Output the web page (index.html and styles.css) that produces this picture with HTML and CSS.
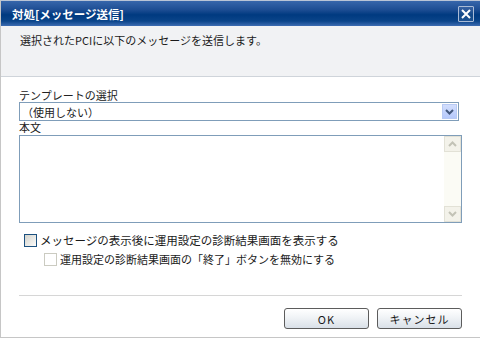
FILE: index.html
```html
<!DOCTYPE html>
<html lang="ja">
<head>
    <meta charset="UTF-8">
    <title>対処[メッセージ送信]</title>
    <link rel="stylesheet" href="styles.css">
</head>
<body>
    <div class="dialog">
        <!-- Barre de titre -->
        <div class="titlebar">
            <span class="title">対処[メッセージ送信]</span>
            <button class="close" aria-label="閉じる">
                <svg width="10" height="10" viewBox="0 0 10 10"><path d="M1 1L9 9M9 1L1 9" stroke="#fff" stroke-width="2"/></svg>
            </button>
        </div>

        <div class="intro">選択されたPCIに以下のメッセージを送信します。</div>

        <div class="form">
            <div class="label">テンプレートの選択</div>
            <div class="select">
                <span class="select-value">（使用しない）</span>
                <span class="select-arrow">
                    <svg width="9" height="6" viewBox="0 0 9 6"><path d="M1 1L4.5 4.5L8 1" fill="none" stroke="#44597e" stroke-width="2"/></svg>
                </span>
            </div>

            <div class="label label-body">本文</div>
            <div class="textarea">
                <div class="text-body"></div>
                <div class="scrollbar">
                    <span class="sb-btn">
                        <svg width="9" height="6" viewBox="0 0 9 6"><path d="M1 5L4.5 1.5L8 5" fill="none" stroke="#c2c2b6" stroke-width="2"/></svg>
                    </span>
                    <span class="sb-track"></span>
                    <span class="sb-btn">
                        <svg width="9" height="6" viewBox="0 0 9 6"><path d="M1 1L4.5 4.5L8 1" fill="none" stroke="#c2c2b6" stroke-width="2"/></svg>
                    </span>
                </div>
            </div>

            <label class="check">
                <span class="box"></span>メッセージの表示後に運用設定の診断結果画面を表示する
            </label>
            <label class="check check-sub">
                <span class="box"></span>運用設定の診断結果画面の「終了」ボタンを無効にする
            </label>

            <div class="rule"></div>

            <div class="actions">
                <button class="btn">OK</button>
                <button class="btn">キャンセル</button>
            </div>
        </div>
    </div>
</body>
</html>
```

FILE: styles.css
```css
/* Reset de base */
* {
    margin: 0;
    padding: 0;
    box-sizing: border-box;
}

body {
    font-family: "Noto Sans CJK JP", "Liberation Sans", sans-serif;
    font-size: 11px;
    line-height: 14px;
    color: #1a1a1a;
    background: #fff;
}

/* Fenêtre */
.dialog {
    width: 480px;
    height: 338px;
    border-left: 1px solid #c6c6c6;
    border-bottom: 1px solid #c6c6c6;
    background: #fff;
    display: flex;
    flex-direction: column;
}

/* Barre de titre */
.titlebar {
    height: 26px;
    border-top: 1px solid #b9c4d6;
    background: linear-gradient(#3766ab 0%, #1d4d93 35%, #003a80 55%, #0a4489 80%, #3d6cb2 100%);
    display: flex;
    align-items: center;
    justify-content: space-between;
    padding: 0 6px 0 11px;
}

.title {
    color: #fff;
    font-weight: 700;
    font-size: 11.5px;
}

.close {
    width: 16px;
    height: 16px;
    border: 1px solid #a9bbd6;
    border-radius: 1px;
    background: rgba(255, 255, 255, 0.08);
    display: flex;
    align-items: center;
    justify-content: center;
    margin-top: 1px;
}

/* Texte d'introduction */
.intro {
    height: 51px;
    background: #f1f2f4;
    border-bottom: 1px solid #cfd4da;
    padding: 7px 19px 0;
}

/* Formulaire */
.form {
    padding: 11px 18px 0 18px;
    display: flex;
    flex-direction: column;
}

.label {
    color: #222;
}

.label-body {
    margin-top: -1px;
    margin-bottom: 1px;
}

.select {
    width: 440px;
    height: 19px;
    border: 1px solid #7f9db9;
    display: flex;
    align-items: center;
    padding-left: 2px;
}

.select-arrow {
    margin-left: auto;
    margin-right: 1px;
    width: 15px;
    height: 15px;
    border: 1px solid #b8caf4;
    background: linear-gradient(#d2defd, #b6c9fb);
    display: flex;
    align-items: center;
    justify-content: center;
}

.textarea {
    width: 443px;
    height: 88px;
    border: 1px solid #7f9db9;
    display: flex;
}

.text-body {
    flex: 1;
}

.scrollbar {
    width: 17px;
    display: flex;
    flex-direction: column;
    background: #fbfbf5;
}

.sb-btn {
    height: 16px;
    border: 1px solid #e2e1d6;
    background: #f3f2ea;
    display: flex;
    align-items: center;
    justify-content: center;
}

.sb-track {
    flex: 1;
}

/* Cases à cocher */
.check {
    display: flex;
    align-items: center;
    height: 18px;
    margin-top: 8px;
    margin-left: 5px;
    font-size: 11.5px;
}

.check .box {
    width: 13px;
    height: 13px;
    border: 1px solid #1c5180;
    background: linear-gradient(135deg, #d3d3cc, #fbfbfa);
    margin-right: 3px;
}

.check-sub {
    margin-top: 1px;
    margin-left: 25px;
    font-size: 11px;
}

.check-sub .box {
    border-color: #cbcbc1;
    background: #fff;
}

.rule {
    width: 443px;
    height: 1px;
    background: #d6d6d6;
    margin-top: 27px;
}

/* Boutons */
.actions {
    width: 443px;
    display: flex;
    justify-content: flex-end;
    gap: 8px;
    margin-top: 12px;
}

.btn {
    width: 85px;
    height: 21px;
    border: 1px solid #5c5c5c;
    border-radius: 3px;
    background: linear-gradient(#ffffff, #f0f3f6 45%, #d9e0e8);
    font-family: "Noto Sans CJK JP", "Liberation Sans", sans-serif;
    font-size: 11px;
    color: #1a1a1a;
    letter-spacing: 1px;
}
```
